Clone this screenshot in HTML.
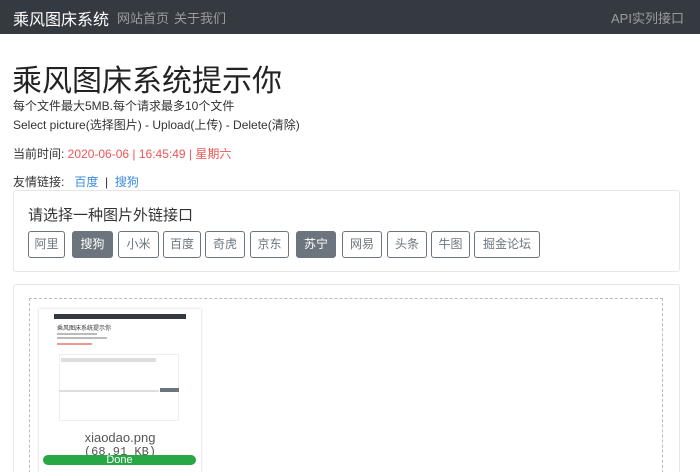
<!DOCTYPE html><html><head><meta charset="utf-8"><style>
*{margin:0;padding:0;box-sizing:border-box}
html,body{width:700px;height:472px;overflow:hidden}
body{background:#fff;font-family:"Liberation Sans","Noto Sans CJK SC",sans-serif;color:#333;position:relative}
.a{position:absolute;white-space:nowrap}
.nav{position:absolute;left:0;top:0;width:700px;height:34px;background:#343a40}
.card{position:absolute;border:1px solid #e6e6e6;border-radius:3px}
.b{position:absolute;top:231px;height:27px;border:1px solid #6c757d;border-radius:3px;font-size:12px;color:#6c757d;text-align:center;line-height:25px}
.b.on{background:#6c757d;color:#fff}
</style></head><body>
<div class="nav"></div>
<div class="a" style="left:13px;top:6px;font-size:16px;color:#fff">乘风图床系统</div>
<div class="a" style="left:117px;top:8px;font-size:13px;color:#9a9da0">网站首页</div>
<div class="a" style="left:174px;top:8px;font-size:13px;color:#9a9da0">关于我们</div>
<div class="a" style="left:611px;top:8px;font-size:13px;color:#9a9da0">API实列接口</div>
<div class="a" style="left:12px;top:56px;font-size:30px;color:#222">乘风图床系统提示你</div>
<div class="a" style="left:13px;top:97px;font-size:12px">每个文件最大5MB.每个请求最多10个文件</div>
<div class="a" style="left:13px;top:116px;font-size:12px">Select picture(选择图片) - Upload(上传) - Delete(清除)</div>
<div class="a" style="left:13px;top:145px;font-size:12px">当前时间: <span style="color:#e55">2020-06-06 | 16:45:49 | 星期六</span></div>
<div class="a" style="left:13px;top:173px;font-size:12px">友情链接: &nbsp; <span style="color:#3a8be0">百度</span> &nbsp;| &nbsp;<span style="color:#3a8be0">搜狗</span></div>
<div class="card" style="left:13px;top:190px;width:667px;height:82px"></div>
<div class="a" style="left:28px;top:204px;font-size:15px;color:#333">请选择一种图片外链接口</div>
<div class="b" style="left:28px;width:37px">阿里</div>
<div class="b on" style="left:72px;width:41px">搜狗</div>
<div class="b" style="left:118px;width:41px">小米</div>
<div class="b" style="left:163px;width:38px">百度</div>
<div class="b" style="left:205px;width:40px">奇虎</div>
<div class="b" style="left:250px;width:39px">京东</div>
<div class="b on" style="left:296px;width:40px">苏宁</div>
<div class="b" style="left:342px;width:40px">网易</div>
<div class="b" style="left:387px;width:40px">头条</div>
<div class="b" style="left:431px;width:39px">牛图</div>
<div class="b" style="left:474px;width:66px">掘金论坛</div>
<div class="card" style="left:13px;top:284px;width:667px;height:200px"></div>
<div class="a" style="left:29px;top:298px;width:634px;height:190px;border:1px dashed #bbb"></div>
<div class="a" style="left:39px;top:309px;width:162px;height:170px;background:#fff;box-shadow:0 0 3px rgba(0,0,0,.18)">
<div class="a" style="left:15px;top:5px;width:132px;height:5px;background:#343a40"></div>
<div class="a" style="left:18px;top:14px;font-size:6px;color:#333">乘风图床系统提示你</div>
<div class="a" style="left:18px;top:24px;width:40px;height:2px;background:#bbb"></div>
<div class="a" style="left:18px;top:28px;width:50px;height:2px;background:#bbb"></div>
<div class="a" style="left:18px;top:34px;width:35px;height:2px;background:#e99"></div>
<div class="a" style="left:20px;top:45px;width:120px;height:67px;border:1px solid #eee"></div>
<div class="a" style="left:22px;top:49px;width:95px;height:4px;background:#ddd"></div>
<div class="a" style="left:20px;top:81px;width:100px;height:2px;background:#ddd"></div>
<div class="a" style="left:121px;top:79px;width:19px;height:4px;background:#6c757d"></div>
<div class="a" style="left:0;top:121px;width:162px;text-align:center;font-size:13px;color:#555">xiaodao.png</div>
<div class="a" style="left:0;top:136px;width:162px;text-align:center;font-size:12px;color:#555;font-family:'Liberation Mono',monospace">(68.91 KB)</div>
<div class="a" style="left:4px;top:146px;width:153px;height:10px;border-radius:5px;background:#28a745;color:#fff;font-size:11px;line-height:10px;text-align:center">Done</div>
</div>
</body></html>
